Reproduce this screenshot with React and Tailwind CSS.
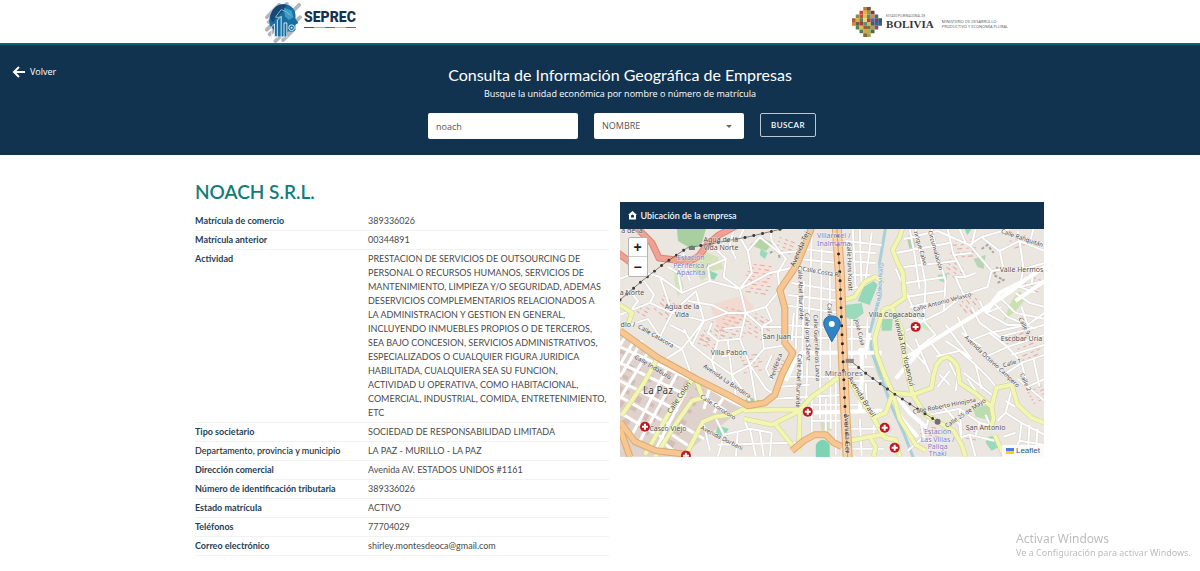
import { useState } from 'react';

const company = {
  name: 'NOACH S.R.L.',
  details: [
    { label: 'Matrícula de comercio', value: '389336026' },
    { label: 'Matrícula anterior', value: '00344891' },
    {
      label: 'Actividad',
      value: [
        'PRESTACION DE SERVICIOS DE OUTSOURCING DE',
        'PERSONAL O RECURSOS HUMANOS, SERVICIOS DE',
        'MANTENIMIENTO, LIMPIEZA Y/O SEGURIDAD, ADEMAS',
        'DESERVICIOS COMPLEMENTARIOS RELACIONADOS A',
        'LA ADMINISTRACION Y GESTION EN GENERAL,',
        'INCLUYENDO INMUEBLES PROPIOS O DE TERCEROS,',
        'SEA BAJO CONCESION, SERVICIOS ADMINISTRATIVOS,',
        'ESPECIALIZADOS O CUALQUIER FIGURA JURIDICA',
        'HABILITADA, CUALQUIERA SEA SU FUNCION,',
        'ACTIVIDAD U OPERATIVA, COMO HABITACIONAL,',
        'COMERCIAL, INDUSTRIAL, COMIDA, ENTRETENIMIENTO,',
        'ETC'
      ].join('\n')
    },
    { label: 'Tipo societario', value: 'SOCIEDAD DE RESPONSABILIDAD LIMITADA' },
    { label: 'Departamento, provincia y municipio', value: 'LA PAZ - MURILLO - LA PAZ', dark: true },
    { label: 'Dirección comercial', value: 'Avenida AV. ESTADOS UNIDOS #1161' },
    { label: 'Número de identificación tributaria', value: '389336026' },
    { label: 'Estado matrícula', value: 'ACTIVO' },
    { label: 'Teléfonos', value: '77704029' },
    { label: 'Correo electrónico', value: 'shirley.montesdeoca@gmail.com' }
  ]
};

// Map data, in the units of the map's viewBox (425 x 228)
const minorStreets = [
  'M0 50L20 42L40 48L62 64L90 52L120 60L150 44L176 38',
  'M0 86L30 74L52 84L76 62M20 42L14 26M40 48L52 84L40 108L62 120',
  'M92 16L106 30L104 48L120 60L132 44L128 22L140 8M140 8L160 24L182 22',
  'M106 30L88 38L90 52M64 24L58 44L62 64M120 60L126 84L146 78L160 61',
  'M76 62L84 92L72 116L92 132M84 92L108 84L126 84L120 110L98 112L92 132L112 146L130 136L120 110',
  'M62 120L84 92M52 84L84 92M130 136L144 120L168 116M144 120L142 98L165 98M130 136L146 160L155 166M142 98L126 84',
  'M10 96L28 90L40 108M112 146L130 172M46 130L62 120L70 142M92 132L98 150M112 146L116 166M130 136L136 172',
  'M150 -2L152 12L166 30L158 44L160 61M114 0L110 16L116 30M128 22L120 8L124 0M146 78L152 92L142 98',
  'M24 52L34 66L30 74M8 60L18 72L12 80M58 44L48 38M70 52L66 40M68 72L92 76L108 84M98 112L88 104L92 94',
  'M108 112L112 146M102 128L126 122M104 100L122 98M64 100L72 116M50 96L66 104M152 126L146 140L152 152',
  'M176 38L218 46M172 54L220 62M163 76L221 84M165 96L222 100M170 108L222 110M160 148L215 148M184 20L218 24M180 30L218 34M168 66L220 72',
  'M192 6L186 180M202 20L200 190M210 44L211 200M184 52L182 150M178 66L176 120M174 84L172 112',
  'M156 170L224 166M160 158L190 156M192 176L226 176M192 192L226 192M206 206L206 170M216 226L216 152M192 170L192 206',
  'M226 12L262 16M228 22L256 24M228 32L256 34M228 46L250 46M240 0L242 60M252 4L246 50M230 60L240 58M233 0L236 60',
  'M226 98L250 98M226 110L254 110M226 138L254 138M232 90L232 136M248 88L246 130M228 152L262 152M228 176L250 176M246 154L248 186M230 200L262 200M230 220L264 220M240 190L242 228M254 220L254 196',
  'M284 10L318 2M276 24L330 14M284 38L336 32M286 54L326 48M286 68L324 62M290 78L308 74M296 0L306 56L304 92M312 0L318 26L326 52L324 82M328 0L334 26L346 48M276 40L300 94M290 0L294 20L300 60',
  'M318 2L350 16L372 42L368 58L344 66L324 82L304 92L286 88M334 26L352 24M340 0L346 14M356 0L352 16M344 66L336 48L346 48L356 44',
  'M350 16L362 8L390 0M362 8L380 22L400 12L425 22M380 22L384 40L404 40L425 34M384 40L372 42M400 12L404 40L400 58L425 52M414 0L410 14M398 2L400 12M414 40L412 56',
  'M360 72L366 84L388 96L408 96M352 78L360 94L380 108M338 88L350 112L366 128L384 146M326 96L338 112L352 130M382 70L396 84L425 90M374 74L388 88L416 100',
  'M396 64L410 74L425 78M400 58L416 64M402 78L408 96L425 84M366 84L382 78',
  'M350 112L370 104L408 96M366 128L388 118L425 106M384 146L402 134L425 126M402 134L408 158L425 150M370 104L388 118L402 134M380 108L425 96M392 126L425 116M414 130L420 158M398 150L425 172',
  'M286 102L304 92L316 106M296 110L310 144M284 112L308 138M308 110L322 128M316 106L300 118M316 128L340 122L356 136L362 160M356 136L370 150L377 159M330 142L318 158M326 112L350 128M342 104L362 118',
  'M330 134L338 150L336 162M320 146L330 156M348 150L364 174M344 144L372 166M296 172L310 186M310 186L340 180L360 194L375 198M310 186L304 208L312 214M336 210L350 206L375 212M324 178L340 196L342 216',
  'M340 180L342 206M350 206L356 228M300 190L304 208L288 222M360 194L356 206M366 186L372 200',
  'M392 162L386 184L378 192M386 184L402 194L400 212L425 216M402 194L425 206M400 212L392 228M384 208L396 204M410 196L408 228M418 200L416 228M386 172L396 178',
  'M96 190L104 206L130 200L152 204M104 206L98 228M130 200L136 228M152 204L150 228M84 196L90 222M118 202L116 228M98 216L176 214M140 202L144 228M124 190L128 200'
];

const centreStreets = [
  'M0 118L72 151M0 134L66 166M0 152L58 182M0 168L50 196M0 184L44 210M8 104L0 116M22 112L0 148M50 134L10 210M60 140L20 212M30 120L0 170M66 162L34 224',
  'M78 152L110 172L128 180M83 168L106 182M60 196L84 210M52 206L70 218M44 214L58 226M14 112L0 136M90 158L84 180M104 168L94 184'
];

const wideStreets = [
  'M425 38L404 52L392 62L352 88L310 114L284 130M425 52L396 72M404 52L380 64L366 84M300 122L276 150',
  'M276 166L290 184L306 198M262 124L226 124M218 124L182 124L174 134L166 152M187 184L262 182M242 124L242 152L240 182M250 104L246 122M273 170L282 190L298 208'
];

const yellowRoads = [
  'M283 -2L280 8L273 21L278 34L283 43L285 69L272 78L264 80',
  'M225 71L235 68L245 53L255 48L264 52M264 80L258 99L255 110L257 125L265 146L273 164L293 166L312 159L314 146L317 136L322 130L328 128L334 132L338 138L340 154L355 164L372 178L374 190L371 200M375 206L385 228',
  'M372 178L377 159L392 156L398 176L412 189L425 194',
  'M272 78L282 101L285 133L293 166',
  'M229 150L240 168L253 188L265 209L276 211L280 228M273 164L266 184L253 189M273 164L280 190L296 216L306 222M293 166L306 186L318 193L334 202L342 216L346 228',
  'M230 212L250 208L256 218L254 228M250 208L262 206',
  'M222 146L205 159L192 168L180 181L152 181L124 182M128 178L112 186L95 188L83 193L65 228M124 190L152 196L178 183M180 181L179 222M156 196L177 222',
  'M38 129L24 154L2 186M72 151L48 186L25 226M76 151L83 169L72 172L58 192L35 228',
  'M0 76L12 84L8 96'
];

const orangeRoads = [
  'M192 -2L186 14L177 36L160 61L165 79L165 99L165 114L173 124L162 146L155 166L145 174L128 177L108 166L78 151L38 129L0 102',
  'M0 193L15 213L36 222L70 226M0 200L10 228M172 222L184 212L195 206L206 206L214 214L222 218'
];

const avenue = 'M217 -2L220 43L222 99L225 173L228 230';
const salmonRoad = 'M14 -4L32 14L39 29L56 31L70 32L79 27L87 16L99 6L116 -3M-2 24L10 33';
const river = 'M266 -2L260 33L261 66L256 82L250 104L252 123L262 150L272 178L284 204L294 230';
const railways = ['M0 71L22 52L45 34L67 19L95 14L128 8L170 -2', 'M232 133L248 146L273 164L296 179L318 193'];

const parks = [
  { d: 'M57 0L86 0L82 14L72 20L58 12Z', fill: '#a9cfa0' },
  { d: 'M84 22L98 28L104 40L92 42L82 52L72 36Z', fill: '#d3e2b9' },
  { d: 'M140 8L154 14L146 22L130 16Z', fill: '#b5d6a3' },
  { d: 'M56 36L64 58L58 68L54 50Z', fill: '#cfe6bb' },
  { d: 'M90 42L98 45L94 51L88 48Z', fill: '#8ad6b4' },
  { d: 'M141 20L148 24L145 30L140 26Z', fill: '#9ad9bd' },
  { d: 'M244 58L254 52L258 56L250 76L238 72Z', fill: '#93d8b9' },
  { d: 'M226 76L242 74L244 84L234 92L226 88Z', fill: '#9cdabd' },
  { d: 'M262 90L273 90L272 102L262 102Z', fill: '#9ed9b4' },
  { d: 'M287 8L294 6L296 18L290 20Z', fill: '#b4ceb0' },
  { d: 'M318 46L328 44L326 54L320 52Z', fill: '#a4ddc2' },
  { d: 'M344 -2L352 0L348 6Z', fill: '#8fd8bb' },
  { d: 'M354 30L366 26L364 40L358 38Z', fill: '#b8d5b3' },
  { d: 'M400 62L406 70L396 82L384 92L392 72Z', fill: '#cbe2b0' },
  { d: 'M353 179L370 176L372 192L356 188Z', fill: '#bcdcb0' },
  { d: 'M369 208L378 206L380 218L372 222L366 214Z', fill: '#99dabb' },
  { d: 'M98 197L109 200L104 208L96 204Z', fill: '#8fd9b4' },
  { d: 'M196 216Q203 206 210 216L210 230L196 230Z', fill: '#7fd3b4' },
  { d: 'M250 108L256 126L264 152L270 174L256 142Z', fill: '#cfe3bd' },
  { d: 'M128 168L140 172L130 176L124 174Z', fill: '#abd19c' },
  { d: 'M200 192L212 194L212 202L202 202Z', fill: '#d2dfb8' },
  { d: 'M302 92L312 96L310 102L304 100Z', fill: '#cbe8bd' }
];

const hospitals = [[296, 98], [188, 183], [25, 198], [66, 227], [265, 199], [275, 219]];

const placeLabels = [
  { text: 'a de la', x: 12, y: 4 },
  { text: 'Agua de la', x: 101, y: 13 },
  { text: 'Vida Norte', x: 101, y: 21 },
  { text: 'Agua de la', x: 62, y: 80 },
  { text: 'Vida', x: 62, y: 88 },
  { text: 'a Norte', x: 12, y: 66 },
  { text: 'San Juan', x: 157, y: 110 },
  { text: 'Villa Pabón', x: 109, y: 126 },
  { text: 'Villa Copacabana', x: 277, y: 88 },
  { text: 'Valle Hermos', x: 402, y: 43 },
  { text: 'Escobar Uría', x: 402, y: 112 },
  { text: 'San Antonio', x: 366, y: 201 },
  { text: 'Casco Viejo', x: 48, y: 202 },
  { text: 'dio /', x: 8, y: 98 }
];

const stationLabels = [
  { text: 'Estación', x: 71, y: 31 },
  { text: 'Periférica /', x: 71, y: 39 },
  { text: 'Apachita', x: 71, y: 46 },
  { text: 'Villarroel /', x: 214, y: 9 },
  { text: 'Inalmama', x: 214, y: 17 },
  { text: 'Estación', x: 318, y: 205 },
  { text: 'Las Villas /', x: 318, y: 213 },
  { text: 'Pallqa', x: 318, y: 220 },
  { text: 'Thaki', x: 318, y: 227 }
];

const streetLabels = [
  { text: 'Avenida Tej', x: 182, y: 21, angle: -66, size: 7 },
  { text: 'Calle Costa Ri', x: 201, y: 45, angle: 10 },
  { text: 'Calle Abel Iturralde', x: 179, y: 64, angle: 88 },
  { text: 'Calle Hans Kundt', x: 228, y: 38, angle: 88 },
  { text: 'Calle Abel Iturralde', x: 177, y: 152, angle: 92 },
  { text: 'Calle Jorge Sáenz', x: 186, y: 108, angle: 88 },
  { text: 'Calle Guerrilleros Lanza', x: 195, y: 119, angle: 88 },
  { text: 'Calle Díaz', x: 208, y: 88, angle: 88 },
  { text: 'José Cusa', x: 238, y: 104, angle: 76 },
  { text: 'nrique Calvo', x: 299, y: 20, angle: 74 },
  { text: 'Circunvalación', x: 314, y: 22, angle: 74 },
  { text: 'Calle Ranquitán', x: 402, y: 11, angle: 19 },
  { text: 'Calle Antonio Velasco', x: 323, y: 75, angle: -15 },
  { text: 'Calle Catacora', x: 35, y: 109, angle: 30 },
  { text: 'Calle Indaburo', x: 32, y: 140, angle: 31 },
  { text: 'Calle Colón', x: 61, y: 170, angle: -56, size: 7 },
  { text: 'Calle Corocoro', x: 97, y: 180, angle: 33 },
  { text: 'Avenida La Bandera', x: 106, y: 154, angle: 34 },
  { text: 'Avenida Dorbani', x: 101, y: 211, angle: 27 },
  { text: 'Avenida Ger', x: 225, y: 205, angle: 88, size: 7 },
  { text: 'Avenida Brasil', x: 240, y: 169, angle: 58, size: 7 },
  { text: 'Avenida Tito Yupanqui', x: 282, y: 122, angle: 77, size: 7 },
  { text: 'Avenida Octavio Campero', x: 371, y: 134, angle: 43 },
  { text: 'Calle Roberto Hinojosa', x: 325, y: 179, angle: -11 },
  { text: 'Calle 25 de Mayo', x: 347, y: 186, angle: -34, size: 6 },
  { text: 'Calle 1', x: 393, y: 136, angle: -16 },
  { text: 'Calle 2', x: 404, y: 154, angle: 66 },
  { text: 'Calle 9', x: 403, y: 98, angle: 62 },
  { text: 'Periférica', x: 158, y: 138, angle: -70 }
];

// Clusters of small houses: [x, y, columns, rows, angle]
const houseBlocks = [
  [106, 78, 5, 8, 15], [128, 34, 5, 8, 8], [92, 92, 4, 6, 40], [330, 12, 5, 5, -4],
  [330, 30, 4, 4, 35], [390, 12, 4, 3, -20], [408, 46, 3, 4, 20], [136, 84, 4, 6, 30],
  [44, 66, 4, 5, 40], [352, 64, 4, 5, 50], [382, 108, 5, 4, -22], [398, 120, 4, 4, -22],
  [300, 196, 4, 3, 10], [152, 126, 3, 4, 25], [120, 128, 4, 5, -10], [160, 8, 3, 4, 20],
  [408, 164, 3, 4, -28], [342, 200, 3, 3, 10], [75, 104, 3, 3, 20], [16, 72, 3, 3, 30]
];

function SeprecLogo() {
  return (
    <a href="#" aria-label="SEPREC" className="flex items-center">
      <svg width="40" height="42" viewBox="0 0 42 42" aria-hidden="true">
        <g stroke="#b3b6bd" strokeWidth="4" strokeLinecap="round">
          <path d="M16 3L3 16M24 2L5 21M37 3L6 34M38 16L12 41M31 29L20 40M8 24L3 29" />
        </g>
        <path
          d="M8 11C11 4 18 1 24 3C31 4 34 11 33 17L36 22L33 24L33 29C32 32 28 31 25 31L24 36H11L10 29C5 26 4 18 8 11Z"
          fill="#1a6da0"
        />
        <path d="M8 11C11 4 18 1 24 3C20 7 22 10 17 12C16 16 11 16 10 21C6 20 6 14 8 11Z" fill="#174873" />
        <path d="M21 6L29 9L31 16L26 19L22 15Z" fill="#3c9cc3" />
        <path d="M8 38V26L11 23V38M14 38V19L18 15V38M21 38V22H24V38" stroke="#dbe9f2" strokeWidth="1" fill="none" />
        <path d="M12 16H19M23 10L28 14M18 8L23 10M12 16L18 8" stroke="#83c3dc" strokeWidth="1" />
        <circle cx="29" cy="27" r="3" fill="none" stroke="#e3f3f8" strokeWidth="1" />
        <circle cx="29" cy="27" r="1" fill="#e3f3f8" />
      </svg>
      <span className="flex flex-col pb-2">
        <span className="font-['Roboto',sans-serif] text-[14px] leading-5 font-black text-[#173250]">SEPREC</span>
        <span className="flex h-px w-full">
          <span className="flex-1 bg-[#31577e]" />
          <span className="flex-1 bg-[#dca73f]" />
          <span className="flex-1 bg-[#bd4544]" />
          <span className="flex-1 bg-[#e4bd59]" />
          <span className="flex-1 bg-[#318577]" />
        </span>
      </span>
    </a>
  );
}

function BoliviaLogo() {
  const tiles = [
    [12, 1, '#bd7c3e'], [16, 1, '#6e563d'], [8, 5, '#c84535'], [12, 5, '#e6ad3f'], [16, 5, '#8a9d49'], [20, 5, '#7b3450'],
    [8, 9, '#b5513e'], [12, 9, '#d9c04e'], [16, 9, '#538c70'], [20, 9, '#dd8c36'], [4, 9, '#8b8d4b'], [24, 9, '#486b76'],
    [0, 13, '#b15c3d'], [4, 13, '#d7ad45'], [8, 13, '#5c7b50'], [12, 13, '#eed47a'], [16, 13, '#b83d40'], [20, 13, '#37799a'], [24, 13, '#6d457a'], [28, 13, '#315777'],
    [0, 17, '#d5833c'], [4, 17, '#64604b'], [8, 17, '#b03941'], [12, 17, '#4e9671'], [16, 17, '#ddb54d'], [20, 17, '#5d4b77'], [24, 17, '#2e698c'], [28, 17, '#475b7c'],
    [4, 21, '#58804e'], [8, 21, '#dcc24c'], [12, 21, '#a45b3d'], [16, 21, '#617e47'], [20, 21, '#b3a23f'], [24, 21, '#8c4964'],
    [8, 25, '#567b4c'], [12, 25, '#d9a341'], [16, 25, '#a4b34b'], [20, 25, '#466a53'], [12, 29, '#806b3e'], [16, 29, '#a9a14d']
  ];
  return (
    <a href="#" aria-label="Estado Plurinacional de Bolivia" className="flex items-center">
      <svg width="30" height="32" viewBox="0 0 32 34" aria-hidden="true">
        {tiles.map(([x, y, fill]) => (
          <rect key={`${x}-${y}`} x={x} y={y} width="4" height="4" fill={fill} />
        ))}
      </svg>
      <span className="flex flex-col pr-2 pl-1">
        <span className="font-['Roboto',sans-serif] text-[3px] leading-[4px] text-[#666]">ESTADO PLURINACIONAL DE</span>
        <span className="font-['Liberation_Serif',serif] text-[11px] leading-3 font-bold text-[#393536]">BOLIVIA</span>
      </span>
      <span className="pt-1 font-['Open_Sans',sans-serif] text-[4px] leading-[5px] text-[#55575a]">
        MINISTERIO DE DESARROLLO
        <br />
        PRODUCTIVO Y ECONOMÍA PLURAL
      </span>
    </a>
  );
}

function SearchSection() {
  const [query, setQuery] = useState('noach');
  const [type, setType] = useState('NOMBRE');

  return (
    <section className="flex bg-[#12334f] text-white">
      <div className="w-24 shrink-0 pt-5 pl-3">
        <button type="button" className="flex items-center gap-1 font-['Open_Sans',sans-serif] text-[9px] leading-[14px]">
          <svg width="14" height="14" viewBox="0 0 14 14" fill="none" stroke="currentColor" strokeWidth="2" aria-hidden="true">
            <path d="M13 7H2M7 2L2 7L7 12" />
          </svg>
          Volver
        </button>
      </div>

      <div className="flex flex-1 flex-col items-center pt-5 pb-4">
        <h1 className="pb-[2px] text-[16px] leading-5">Consulta de Información Geográfica de Empresas</h1>
        <p className="font-['Open_Sans',sans-serif] text-[9px] leading-[14px]">
          Busque la unidad económica por nombre o número de matrícula
        </p>

        <form className="mt-3 flex items-start gap-4 pl-1" onSubmit={(e) => e.preventDefault()}>
          <input
            type="text"
            aria-label="Nombre o matrícula"
            value={query}
            onChange={(e) => setQuery(e.target.value)}
            className="h-[26px] w-[150px] rounded-xs bg-white px-2 font-['Open_Sans',sans-serif] text-[9px] text-[#555] outline-none"
          />
          <div className="relative">
            <select
              aria-label="Buscar por"
              value={type}
              onChange={(e) => setType(e.target.value)}
              className="block h-[26px] w-[150px] appearance-none rounded-xs bg-white px-2 font-['Open_Sans',sans-serif] text-[9px] text-[#555] outline-none"
            >
              <option>NOMBRE</option>
              <option>MATRÍCULA</option>
            </select>
            <svg className="pointer-events-none absolute top-3 right-3" width="6" height="3" viewBox="0 0 6 3" fill="#666" aria-hidden="true">
              <path d="M0 0H6L3 3Z" />
            </svg>
          </div>
          <button type="submit" className="h-6 rounded-xs border border-[#b9c8d4] px-[10px] text-[8px] font-semibold tracking-wider">
            BUSCAR
          </button>
        </form>
      </div>
      <div className="w-14 shrink-0" />
    </section>
  );
}

function CompanyDetails() {
  return (
    <div className="flex-[414]">
      <h2 className="mb-2 text-[19px] leading-6 font-semibold text-[#127d78]">{company.name}</h2>
      <dl>
        {company.details.map(({ label, value, dark }) => (
          <div key={label} className="flex border-b border-[#f1f2f3] py-[2px] text-[9px] leading-[14px]">
            <dt
              className={
                dark
                  ? 'w-[173px] shrink-0 font-medium text-[#24292e]'
                  : 'w-[173px] shrink-0 font-bold text-[#1d4159]'
              }
            >
              {label}
            </dt>
            <dd className="whitespace-pre-line text-[#494949]">{value}</dd>
          </div>
        ))}
      </dl>
    </div>
  );
}

function MapLabels({ labels, fill }) {
  return (
    <g fill={fill} stroke="#fff" strokeOpacity="0.6" strokeWidth="1" paintOrder="stroke" textAnchor="middle">
      {labels.map(({ text, x, y, angle = 0, size }) => (
        <text key={`${text}-${x}`} fontSize={size ?? (angle ? 6 : 7)} transform={`translate(${x} ${y}) rotate(${angle})`}>
          {text}
        </text>
      ))}
    </g>
  );
}

function MapDrawing() {
  return (
    <svg
      viewBox="0 0 425 228"
      preserveAspectRatio="xMidYMid slice"
      className="block h-auto w-full font-['Noto_Sans',sans-serif]"
      role="img"
      aria-label="Mapa de La Paz"
    >
      <rect width="425" height="228" fill="#ebe6e0" />
      <path d="M0 104L72 146L128 176L60 228L0 228Z" fill="#dfd2cc" />
      <path d="M90 76L124 66L134 78L118 96L100 104Z" fill="#f2dad1" />
      <path d="M128 36L150 34L154 54L132 62L126 50Z" fill="#f4e2da" />

      {parks.map(({ d, fill }) => <path key={d} d={d} fill={fill} />)}

      {/* Houses */}
      {houseBlocks.map(([x, y, columns, rows, angle]) => (
        <g key={`${x}-${y}`} transform={`translate(${x} ${y}) rotate(${angle})`} fill="#e9a9a4">
          {Array.from({ length: columns * rows }, (_, i) => (
            <rect
              key={i}
              x={(i % columns) * 5 + (i % 3)}
              y={Math.floor(i / columns) * 4}
              width={2 + (i % 3)}
              height="1"
            />
          ))}
        </g>
      ))}
      <g fill="#cfafa9">
        {Array.from({ length: 54 }, (_, i) => (
          <rect
            key={i}
            x={(i % 9) * 12}
            y={Math.floor(i / 9) * 12}
            width={4 + (i % 3) * 2}
            height={4 + (i % 2) * 3}
            transform="translate(-8 112) rotate(28)"
            opacity="0.6"
          />
        ))}
      </g>
      <path d="M150 24L158 20L160 30M362 20L368 16L374 24M378 38L374 46L382 50M378 54L386 50" stroke="#a8a5a2" strokeWidth="2" strokeDasharray="3 2" fill="none" />

      <path d={river} fill="none" stroke="#a9cfd9" strokeWidth="3" />
      <g fill="none" stroke="#d6d2cd" strokeWidth="3">
        {minorStreets.map((d) => <path key={d} d={d} />)}
      </g>
      <g fill="none" stroke="#fff" strokeWidth="2">
        {minorStreets.map((d) => <path key={d} d={d} />)}
      </g>
      <g fill="none" stroke="#fff" strokeWidth="3">
        {centreStreets.map((d) => <path key={d} d={d} />)}
      </g>
      <g fill="none" stroke="#fff" strokeWidth="4">
        {wideStreets.map((d) => <path key={d} d={d} />)}
      </g>
      <circle cx="242" cy="123" r="4" fill="#fff" />

      {/* Main roads: casing first, then the surface */}
      <g fill="none" strokeLinejoin="round">
        <g stroke="#cdd19a" strokeWidth="5">
          {yellowRoads.map((d) => <path key={d} d={d} />)}
        </g>
        <g stroke="#f3f6ae" strokeWidth="4">
          {yellowRoads.map((d) => <path key={d} d={d} />)}
        </g>
        <g stroke="#dcaa6d" strokeWidth="7">
          {orangeRoads.map((d) => <path key={d} d={d} />)}
        </g>
        <g stroke="#f6c793" strokeWidth="5">
          {orangeRoads.map((d) => <path key={d} d={d} />)}
        </g>
        <path d={salmonRoad} stroke="#d98478" strokeWidth="7" />
        <path d={salmonRoad} stroke="#eea293" strokeWidth="5" />
        <path d={avenue} stroke="#dfa873" strokeWidth="10" />
        <path d={avenue} stroke="#f9d0a5" strokeWidth="8" />
        <path d={avenue} stroke="#d99a68" strokeWidth="1" />
        <path d={avenue} stroke="#2d2926" strokeWidth="3" strokeLinecap="round" strokeDasharray="0 9" />
      </g>

      <g fill="none" stroke="#3c3937">
        {railways.map((d) => (
          <g key={d}>
            <path d={d} strokeWidth="1" strokeOpacity="0.6" />
            <path d={d} strokeWidth="3" strokeLinecap="round" strokeDasharray="0 9" />
          </g>
        ))}
      </g>
      <rect x="226" y="130" width="8" height="4" fill="#8e8783" />
      <rect x="69" y="17" width="6" height="4" fill="#68807b" />
      <circle cx="318" cy="193" r="3" fill="#706b7d" />

      <MapLabels labels={streetLabels} fill="#46423f" />
      <MapLabels labels={placeLabels} fill="#55504d" />
      <MapLabels labels={stationLabels} fill="#8078c4" />
      <MapLabels labels={[{ text: 'La Paz', x: 38, y: 165, size: 10 }]} fill="#3f3b3a" />
      <MapLabels labels={[{ text: 'Miraflores', x: 224, y: 147, size: 8 }]} fill="#716b77" />
      <MapLabels labels={[{ text: 'Río Orkojahuira', x: 262, y: 56, angle: -84 }]} fill="#7a9fc6" />

      {hospitals.map(([x, y]) => (
        <g key={`${x}-${y}`}>
          <circle cx={x} cy={y} r="5" fill="#bd1822" />
          <path d={`M${x - 3} ${y}H${x + 3}M${x} ${y - 3}V${y + 3}`} stroke="#fff" strokeWidth="2" />
        </g>
      ))}

      {/* Company marker */}
      <path d="M212 113L206 101C201 92 206 87 212 87C219 87 223 93 219 101Z" fill="#2f84c5" stroke="#2467a3" strokeWidth="1" />
      <circle cx="212" cy="95" r="3" fill="#fff" />
    </svg>
  );
}

function LocationCard() {
  return (
    <section className="mt-[22px] flex-[425]">
      <h3 className="flex h-[27px] items-center gap-1 bg-[#12334f] px-2 text-[9px] font-medium text-white">
        <svg width="9" height="9" viewBox="0 0 18 18" aria-hidden="true">
          <path d="M9 0L18 8H16V17H2V8H0Z" fill="#fff" />
          <path d="M6 13V9L9 7L12 9V13Z" fill="#12334f" />
        </svg>
        Ubicación de la empresa
      </h3>
      <div className="relative overflow-hidden">
        <MapDrawing />
        <div className="absolute top-2 left-2 flex flex-col rounded-xs border border-[#b8b5b1] bg-white font-['Liberation_Sans',sans-serif] text-[14px] leading-[18px] font-bold text-[#222]">
          <button type="button" aria-label="Acercar" className="h-[19px] w-[18px] border-b border-[#ccc]">+</button>
          <button type="button" aria-label="Alejar" className="h-[19px] w-[18px]">−</button>
        </div>
        <a
          href="#"
          className="absolute right-0 bottom-0 flex items-center gap-[2px] bg-white/80 px-1 font-['Liberation_Sans',sans-serif] text-[8px] leading-3 text-[#1d5d80]"
        >
          <svg width="8" height="6" viewBox="0 0 8 6" aria-hidden="true">
            <path d="M0 0H8V3H0Z" fill="#4c7be1" />
            <path d="M0 3H8V6H0Z" fill="#ffd500" />
          </svg>
          Leaflet
        </a>
      </div>
    </section>
  );
}

export default function App() {
  return (
    <div className="relative min-h-screen bg-white font-['Lato',sans-serif]">
      <header className="flex h-[45px] items-center justify-between border-b-2 border-[#0b6470] pr-[16%] pl-[22%]">
        <SeprecLogo />
        <BoliviaLogo />
      </header>

      <SearchSection />

      <main className="flex items-start gap-[11px] pt-[25px] pr-[13%] pb-4 pl-[16.25%]">
        <CompanyDetails />
        <LocationCard />
      </main>

      {/* System watermark */}
      <div className="pointer-events-none fixed right-1 bottom-3 w-[180px] font-['Noto_Sans',sans-serif] text-[#bdbdbd]">
        <p className="text-[12px] leading-4">Activar Windows</p>
        <p className="text-[9px] leading-3">Ve a Configuración para activar Windows.</p>
      </div>
    </div>
  );
}
